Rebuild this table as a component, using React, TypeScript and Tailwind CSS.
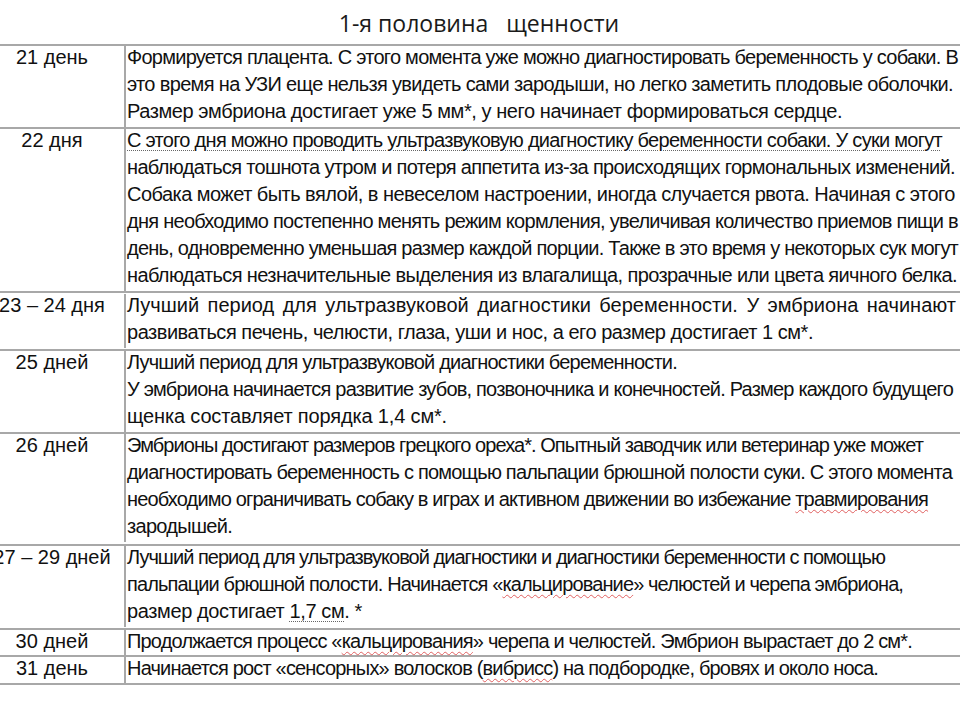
import { useLayoutEffect, useRef, useState } from 'react';

const wavy = 'underline decoration-wavy decoration-[#e06060] decoration-1 underline-offset-[3px]';
const dotted = 'underline decoration-dotted decoration-[#666] decoration-1 underline-offset-[3px]';

// text starts at x=127; each line is fitted so that it ends where the scan ends it
const START_X = 127;

type Line = { end: number; text: React.ReactNode };

type Row = {
  day: string;
  lines: Line[];
  extra?: string;
};

function FitLine({ end, children }: { end: number; children: React.ReactNode }) {
  const ref = useRef<HTMLSpanElement>(null);
  const [spacing, setSpacing] = useState(0);

  useLayoutEffect(() => {
    const measure = () => {
      const el = ref.current;
      if (!el) return;
      const prev = el.style.letterSpacing;
      el.style.letterSpacing = '0px';
      const w = el.getBoundingClientRect().width;
      el.style.letterSpacing = prev;
      const n = (el.textContent ?? '').length || 1;
      setSpacing(Math.round(((end - START_X - w) / n) * 1000) / 1000);
    };
    measure();
    document.fonts?.ready.then(measure);
  }, [end]);

  return (
    <div className="whitespace-nowrap">
      <span ref={ref} style={{ letterSpacing: `${spacing}px` }}>
        {children}
      </span>
    </div>
  );
}

const rows: Row[] = [
  {
    day: '21 день',
    lines: [
      { end: 958, text: 'Формируется плацента. С этого момента уже можно диагностировать беременность у собаки. В' },
      { end: 953, text: 'это время на УЗИ еще нельзя увидеть сами зародыши, но легко заметить плодовые оболочки.' },
      { end: 842, text: 'Размер эмбриона достигает уже 5 мм*, у него начинает формироваться сердце.' },
    ],
  },
  {
    day: '22 дня',
    lines: [
      {
        end: 942,
        text: (
          <span className={dotted}>
            С этого дня можно проводить ультразвуковую диагностику беременности собаки. У суки могут
          </span>
        ),
      },
      { end: 955, text: 'наблюдаться тошнота утром и потеря аппетита из-за происходящих гормональных изменений.' },
      { end: 955, text: 'Собака может быть вялой, в невеселом настроении, иногда случается рвота. Начиная с этого' },
      { end: 958, text: 'дня необходимо постепенно менять режим кормления, увеличивая количество приемов пищи в' },
      { end: 958, text: 'день, одновременно уменьшая размер каждой порции. Также в это время у некоторых сук могут' },
      { end: 957, text: 'наблюдаться незначительные выделения из влагалища, прозрачные или цвета яичного белка.' },
    ],
  },
  {
    day: '23 – 24 дня',
    extra: 'py-[1px]',
    lines: [
      { end: 0, text: 'Лучший период для ультразвуковой диагностики беременности. У эмбриона начинают' },
      { end: 813, text: 'развиваться печень, челюсти, глаза, уши и нос, а его размер достигает 1 см*.' },
    ],
  },
  {
    day: '25 дней',
    lines: [
      { end: 677, text: 'Лучший период для ультразвуковой диагностики беременности.' },
      { end: 953, text: 'У эмбриона начинается развитие зубов, позвоночника и конечностей. Размер каждого будущего' },
      { end: 447, text: 'щенка составляет порядка 1,4 см*.' },
    ],
  },
  {
    day: '26 дней',
    extra: 'pb-[2px]',
    lines: [
      { end: 923, text: 'Эмбрионы достигают размеров грецкого ореха*. Опытный заводчик или ветеринар уже может' },
      { end: 952, text: 'диагностировать беременность с помощью пальпации брюшной полости суки. С этого момента' },
      {
        end: 928,
        text: (
          <>
            необходимо ограничивать собаку в играх и активном движении во избежание{' '}
            <span className={wavy}>травмирования</span>
          </>
        ),
      },
      { end: 232, text: 'зародышей.' },
    ],
  },
  {
    day: '27 – 29 дней',
    extra: 'pb-[1px]',
    lines: [
      { end: 885, text: 'Лучший период для ультразвуковой диагностики и диагностики беременности с помощью' },
      {
        end: 903,
        text: (
          <>
            пальпации брюшной полости. Начинается «<span className={wavy}>кальцирование</span>» челюстей и черепа эмбриона,
          </>
        ),
      },
      {
        end: 362,
        text: (
          <>
            размер достигает <span className={dotted}>1,7 см</span>. *
          </>
        ),
      },
    ],
  },
  {
    day: '30 дней',
    extra: 'h-[27px]',
    lines: [
      {
        end: 912,
        text: (
          <>
            Продолжается процесс «<span className={wavy}>кальцирования</span>» черепа и челюстей. Эмбрион вырастает до 2 см*.
          </>
        ),
      },
    ],
  },
  {
    day: '31 день',
    extra: 'h-[28px]',
    lines: [
      {
        end: 878,
        text: (
          <>
            Начинается рост «сенсорных» волосков (<span className={wavy}>вибрисс</span>) на подбородке, бровях и около носа.
          </>
        ),
      },
    ],
  },
];

function TableRow({ row }: { row: Row }) {
  return (
    <div className={`flex border-b-2 border-[#a8a8a8] ${row.extra ?? ''}`}>
      <div className="flex w-[124px] shrink-0 justify-center pr-[20px]">
        <div className="-mt-[2px] pb-[2px] whitespace-nowrap">{row.day}</div>
      </div>
      <div className="min-w-0 flex-1 border-l-2 border-[#a8a8a8] pl-[1px] pr-[4px]">
        <div className="-mt-[2px] pb-[2px]">
          {row.lines.map((line, i) =>
            line.end === 0 ? (
              <div key={i} className="whitespace-nowrap text-justify [text-align-last:justify]">
                {line.text}
              </div>
            ) : (
              <FitLine key={i} end={line.end}>
                {line.text}
              </FitLine>
            )
          )}
        </div>
      </div>
    </div>
  );
}

export default function App() {
  return (
    <div className="h-[720px] w-[960px] overflow-hidden bg-white">
      <div className="flex h-[44px] items-center justify-center pr-[2px] pt-[2px]">
        <h1 className="whitespace-pre font-['Open_Sans',sans-serif] text-[23px] text-[#1a1a1a]">
          1-я половина   щенности
        </h1>
      </div>
      <div className="border-t-2 border-[#a8a8a8] font-['Liberation_Sans',Arial,sans-serif] text-[20px] leading-[27px] text-[#111]">
        {rows.map((row) => (
          <TableRow key={row.day} row={row} />
        ))}
      </div>
    </div>
  );
}
